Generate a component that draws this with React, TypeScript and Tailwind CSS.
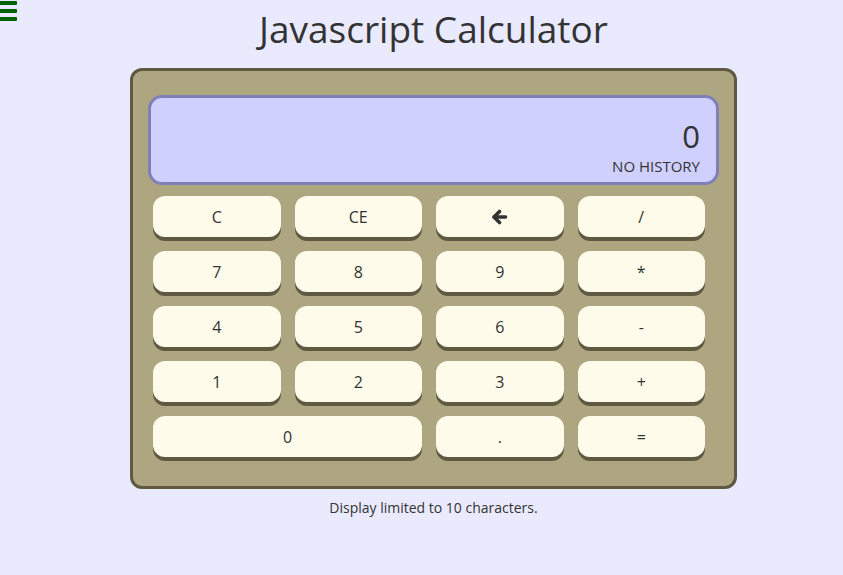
import React from "react";

const font = { fontFamily: '"Comic Sans MS", "Open Sans", "DejaVu Sans", sans-serif' };

function Key({ label, wide }: { label: React.ReactNode; wide?: boolean }) {
  return (
    <button
      className={`h-[41px] rounded-[12px] bg-[#fffbeb] shadow-[0_4px_0_#5e5940] text-[16px] text-[#333] flex items-center justify-center ${wide ? "col-span-2" : ""}`}
    >
      {label}
    </button>
  );
}

function Arrow() {
  return (
    <svg width="17" height="16" viewBox="0 0 17 16" fill="none" stroke="#333" strokeWidth="3.6" strokeLinecap="round" strokeLinejoin="round">
      <path d="M8.5 2.5 L3 8 L8.5 13.5" />
      <path d="M3.5 8 H14.5" />
    </svg>
  );
}

export default function App() {
  const rows: React.ReactNode[] = [
    "C", "CE", <Arrow key="a" />, "/",
    "7", "8", "9", "*",
    "4", "5", "6", "-",
    "1", "2", "3", "+",
  ];
  return (
    <div className="min-h-[575px] bg-[#eaeaff] relative" style={font}>
      <div className="absolute left-0 top-[1px] flex flex-col gap-[4px]">
        <div className="w-[17px] h-[4px] bg-[#006400] rounded-r-[1px]" />
        <div className="w-[17px] h-[4px] bg-[#006400] rounded-r-[1px]" />
        <div className="w-[17px] h-[4px] bg-[#006400] rounded-r-[1px]" />
      </div>
      <div className="flex flex-col items-center pl-[24px]">
        <h1 className="text-[37px] leading-[46px] mt-[6px] text-[#333]">Javascript Calculator</h1>
        <div className="mt-[16px] w-[607px] h-[421px] border-[3px] border-[#5e5940] rounded-[12px] bg-[#aea680] pt-[24px] pl-[15px] pr-[15px]">
          <div className="h-[90px] border-[3px] border-[#8080b8] rounded-[14px] bg-[#d0d0ff] flex flex-col items-end justify-end pr-[16px] pb-[7px] text-[#333]">
            <div className="text-[31px] leading-[36px] mb-[3px]">0</div>
            <div className="text-[15px] leading-[18px]">NO HISTORY</div>
          </div>
          <div className="grid grid-cols-4 w-[557px] gap-x-[14px] gap-y-[14px] pl-[5px] mt-[11px]">
            {rows.map((r, i) => (
              <Key key={i} label={r} />
            ))}
            <Key label="0" wide />
            <Key label="." />
            <Key label="=" />
          </div>
        </div>
        <div className="mt-[9px] text-[14px] leading-[20px] text-[#333]">Display limited to 10 characters.</div>
      </div>
    </div>
  );
}
